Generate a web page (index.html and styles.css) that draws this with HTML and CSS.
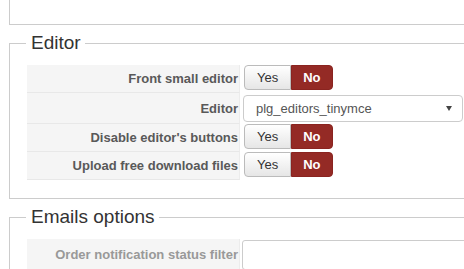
FILE: index.html
```html
<!DOCTYPE html>
<html lang="en">
<head>
  <meta charset="UTF-8">
  <title>Configuration</title>
  <link rel="stylesheet" href="styles.css">
</head>
<body>
  <div class="page">
    <div class="fs-top"></div>

    <fieldset class="fs">
      <legend>Editor</legend>
      <div class="row">
        <div class="label">Front small editor</div>
        <div class="control">
          <div class="btn-group">
            <span class="btn">Yes</span>
            <span class="btn btn-no">No</span>
          </div>
        </div>
      </div>
      <div class="row">
        <div class="label">Editor</div>
        <div class="control control-select">
          <div class="select">
            <span>plg_editors_tinymce</span>
            <span class="caret"></span>
          </div>
        </div>
      </div>
      <div class="row">
        <div class="label">Disable editor's buttons</div>
        <div class="control">
          <div class="btn-group">
            <span class="btn">Yes</span>
            <span class="btn btn-no">No</span>
          </div>
        </div>
      </div>
      <div class="row">
        <div class="label">Upload free download files</div>
        <div class="control">
          <div class="btn-group">
            <span class="btn">Yes</span>
            <span class="btn btn-no">No</span>
          </div>
        </div>
      </div>
    </fieldset>

    <fieldset class="fs">
      <legend>Emails options</legend>
      <div class="row">
        <div class="label label-muted">Order notification status filter</div>
        <div class="control control-input">
          <div class="input"></div>
        </div>
      </div>
    </fieldset>
  </div>
</body>
</html>
```

FILE: styles.css
```css
body {
  margin: 0;
  overflow: hidden;
  background: #fff;
  font-family: "Liberation Sans", Arial, sans-serif;
  font-size: 13px;
  color: #333;
}
.page {
  width: 600px;
  padding-left: 9px;
}
.fs-top {
  height: 24px;
  border: 1px solid #ccc;
  border-top: none;
}
.fs {
  margin: 7px 0 0;
  padding: 11px 0 18px 17px;
  border: 1px solid #ccc;
  min-width: 0;
}
.fs legend {
  margin-left: -1px;
  padding: 0 4px 0 5px;
  font-size: 19px;
  line-height: 22px;
  color: #333;
}
.row {
  display: flex;
}
.label {
  box-sizing: border-box;
  width: 213px;
  display: flex;
  align-items: center;
  justify-content: flex-end;
  padding-right: 1px;
  background: #f5f5f5;
  border-bottom: 1px solid #e8e8e8;
  border-right: 1px solid #ececec;
  font-weight: bold;
  color: #595959;
  white-space: nowrap;
}
.label-muted {
  color: #999;
}
.control {
  padding: 0 0 3px 4px;
}
.control-select {
  padding: 2px 0 2px 3px;
}
.control-input {
  padding: 1px 0 0 2px;
  flex: 1;
}
.btn-group {
  display: flex;
  height: 25px;
}
.btn {
  box-sizing: border-box;
  display: flex;
  align-items: center;
  padding: 0 12px;
  border: 1px solid #bbb;
  border-radius: 4px 0 0 4px;
  background: linear-gradient(#fff, #e6e6e6);
  color: #333;
}
.btn-no {
  padding: 0 11px;
  border-color: #8a2420;
  border-radius: 0 4px 4px 0;
  background: #942a25;
  color: #fff;
  font-weight: bold;
}
.select {
  box-sizing: border-box;
  width: 220px;
  height: 27px;
  display: flex;
  align-items: center;
  justify-content: space-between;
  padding: 0 10px 0 12px;
  border: 1px solid #ccc;
  border-radius: 4px;
  color: #555;
}
.caret {
  width: 0;
  height: 0;
  border-left: 3px solid transparent;
  border-right: 3px solid transparent;
  border-top: 5px solid #444;
}
.input {
  height: 28px;
  border: 1px solid #ccc;
  border-radius: 3px;
}
```
